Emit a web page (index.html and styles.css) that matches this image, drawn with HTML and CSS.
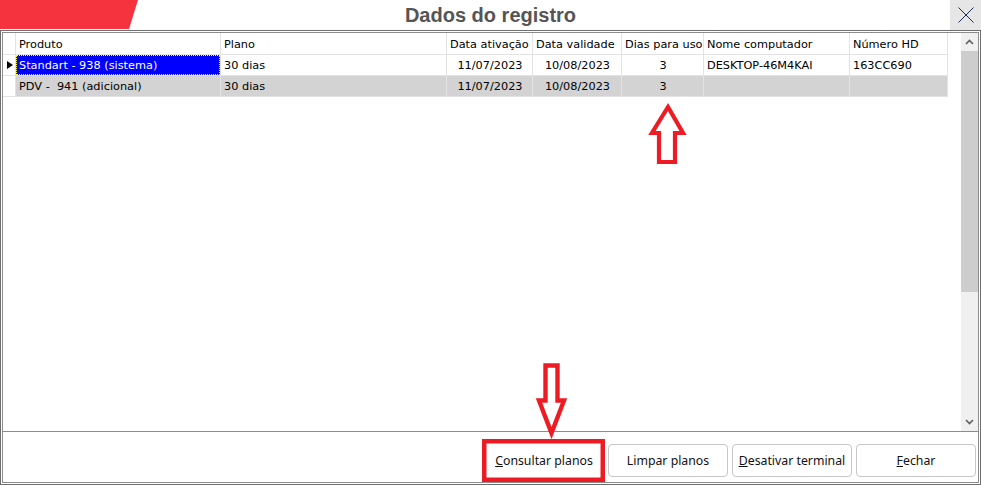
FILE: index.html
```html
<!DOCTYPE html>
<html lang="pt-BR">
<head>
  <meta charset="UTF-8">
  <title>Dados do registro</title>
  <link rel="stylesheet" href="styles.css">
</head>
<body>
  <div class="window">
    <div class="titlebar">
      <div class="brand"><div class="brand-shape"></div></div>
      <div class="title">Dados do registro</div>
      <div class="controls">
        <button class="close">
          <svg width="16" height="16" viewBox="0 0 16 16"><path d="M0.5 0.5 L15.5 15.5 M15.5 0.5 L0.5 15.5" stroke="#1c2b5a" stroke-width="1" fill="none"/></svg>
        </button>
      </div>
    </div>

    <div class="frame">
      <div class="panel">
        <div class="grid-area">
          <div class="table">
            <div class="row head">
              <div class="cell"></div>
              <div class="cell">Produto</div>
              <div class="cell">Plano</div>
              <div class="cell">Data ativação</div>
              <div class="cell">Data validade</div>
              <div class="cell">Dias para uso</div>
              <div class="cell">Nome computador</div>
              <div class="cell">Número HD</div>
            </div>
            <div class="row">
              <div class="cell ind"><span class="pointer"></span></div>
              <div class="cell sel"><div class="focus">Standart - 938 (sistema)</div></div>
              <div class="cell">30 dias</div>
              <div class="cell c">11/07/2023</div>
              <div class="cell c">10/08/2023</div>
              <div class="cell c">3</div>
              <div class="cell">DESKTOP-46M4KAI</div>
              <div class="cell">163CC690</div>
            </div>
            <div class="row alt">
              <div class="cell ind"></div>
              <div class="cell">PDV -&nbsp; 941 (adicional)</div>
              <div class="cell">30 dias</div>
              <div class="cell c">11/07/2023</div>
              <div class="cell c">10/08/2023</div>
              <div class="cell c">3</div>
              <div class="cell"></div>
              <div class="cell"></div>
            </div>
          </div>
          <div class="vscroll">
            <div class="sb-btn">
              <svg width="9" height="6" viewBox="0 0 9 6"><path d="M1 5 L4.5 1.5 L8 5" stroke="#606060" stroke-width="1.7" fill="none"/></svg>
            </div>
            <div class="sb-thumb"></div>
            <div class="sb-track"></div>
            <div class="sb-btn">
              <svg width="9" height="6" viewBox="0 0 9 6"><path d="M1 1 L4.5 4.5 L8 1" stroke="#606060" stroke-width="1.7" fill="none"/></svg>
            </div>
          </div>
        </div>

        <div class="buttons">
          <button class="btn focused"><u>C</u>onsultar planos</button>
          <button class="btn">Limpar planos</button>
          <button class="btn"><u>D</u>esativar terminal</button>
          <button class="btn"><u>F</u>echar</button>
        </div>
      </div>
    </div>

    <svg class="marks" width="981" height="485" viewBox="0 0 981 485">
      <polygon points="668,107 683,133 675,133 675,162 659,162 659,133 652,133" fill="none" stroke="#ed1c24" stroke-width="4.2"/>
      <polygon points="545.5,365.5 557.5,365.5 557.5,400.5 564,400.5 551.5,433 539,400.5 545.5,400.5" fill="none" stroke="#ed1c24" stroke-width="4.4"/>
      <rect x="484.25" y="441.25" width="118.5" height="38.5" fill="none" stroke="#ed1c24" stroke-width="4.5"/>
    </svg>
  </div>
</body>
</html>
```

FILE: styles.css
```css
body {
  margin: 0;
  width: 981px;
  height: 485px;
  overflow: hidden;
  background: #fff;
  font-family: "DejaVu Sans", sans-serif;
  font-size: 11.3px;
  color: #000;
}

.window {
  position: relative;
  width: 981px;
  height: 485px;
  display: flex;
  flex-direction: column;
}

.titlebar {
  height: 30px;
  display: grid;
  grid-template-columns: 1fr auto 1fr;
}

.brand-shape {
  width: 138px;
  height: 29px;
  background: #f4333f;
  clip-path: polygon(0 0, 138px 0, 129px 29px, 0 29px);
}

.title {
  font: bold 20px "Liberation Sans", Arial, sans-serif;
  color: #555;
  line-height: 30px;
}

.controls {
  display: flex;
  justify-content: flex-end;
}

.close {
  width: 31px;
  height: 30px;
  padding: 0;
  border: none;
  background: #e6e6e6;
  display: flex;
  align-items: center;
  justify-content: center;
}

.frame {
  flex: 1;
  display: flex;
  border: 1px solid #6e6e6e;
  padding: 1px;
}

.panel {
  flex: 1;
  display: flex;
  flex-direction: column;
  border: 1px solid #8c8c8c;
}

.grid-area {
  height: 399px;
  box-sizing: border-box;
  border-bottom: 1px solid #8c8c8c;
  display: flex;
}

.table {
  flex: 1;
}

.row {
  display: grid;
  grid-template-columns: 13px 205px 226px 86px 89px 82px 146px 98px;
}

.cell {
  height: 21px;
  box-sizing: border-box;
  padding: 1px 2px 0 3px;
  line-height: 20px;
  white-space: nowrap;
  overflow: hidden;
  border-right: 1px solid #e3e3e3;
  border-bottom: 1px solid #e3e3e3;
}

.head .cell {
  height: 22px;
  padding-top: 1.5px;
}

.c {
  text-align: center;
}

.ind {
  padding: 0;
  display: flex;
  align-items: center;
}

.pointer {
  margin-left: 4px;
  border-left: 6px solid #000;
  border-top: 4.5px solid transparent;
  border-bottom: 4.5px solid transparent;
}

.alt .cell {
  background: #d3d3d3;
}

.alt .cell.ind {
  background: #fff;
}

.sel {
  padding: 0;
}

.sel .focus {
  height: 20px;
  box-sizing: border-box;
  padding: 0 0 0 2px;
  line-height: 19px;
  background: #0000ff;
  color: #fff;
  border: 1px dotted #ffff00;
}

.vscroll {
  width: 17px;
  background: #f0f0f0;
  display: flex;
  flex-direction: column;
}

.sb-btn {
  height: 18px;
  display: flex;
  align-items: center;
  justify-content: center;
}

.sb-thumb {
  height: 241px;
  background: #cdcdcd;
}

.sb-track {
  flex: 1;
}

.buttons {
  flex: 1;
  display: flex;
  justify-content: flex-end;
  align-items: flex-start;
  gap: 4px;
  padding: 12px 2px 0 0;
}

.btn {
  width: 120px;
  height: 33px;
  box-sizing: border-box;
  border: 1px solid #c6c6c6;
  border-radius: 4px;
  background: #fff;
  font: 12.3px "Noto Sans", sans-serif;
  color: #111;
  padding: 0;
}

.btn.focused {
  border-color: #fff;
}

.marks {
  position: absolute;
  left: 0;
  top: 0;
  pointer-events: none;
}
```
